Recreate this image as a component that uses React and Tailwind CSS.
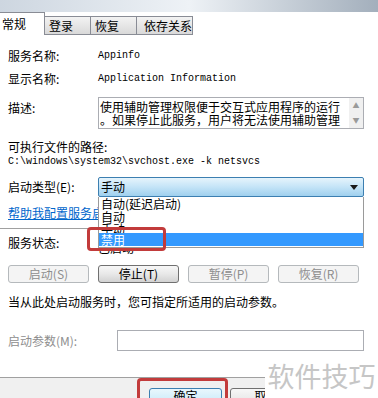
function Btn({ children, disabled }) {
  return (
    <div
      className={
        disabled
          ? "h-[18px] w-[81px] flex items-center justify-center rounded-[3px] border border-[#b5b9bc] bg-[#f4f4f4] text-[12px] leading-none text-[#8e8e8e]"
          : "h-[18px] w-[81px] flex items-center justify-center rounded-[3px] border border-[#707070] bg-gradient-to-b from-[#f7f7f7] via-[#e8e8e8] to-[#d2d2d2] text-[12px] leading-none text-black"
      }
    >
      {children}
    </div>
  )
}

function Row({ label, children, className = "" }) {
  return (
    <div className={`flex items-center h-[14px] ${className}`}>
      <div className="w-[90px] shrink-0 text-[12px] leading-[14px]">{label}</div>
      {children}
    </div>
  )
}

export default function App() {
  return (
    <div className="relative w-[378px] h-[398px] overflow-hidden bg-white text-black font-['Noto_Sans_CJK_SC','Noto_Sans',sans-serif]">
      {/* window chrome strip */}
      <div className="h-[12px] bg-gradient-to-r from-[#cdd6e0] via-[#eef2f6] to-[#a3afbc]" />

      {/* tabs */}
      <div className="flex items-end h-[23px] text-[12px]">
        <div className="h-[23px] w-[45px] bg-white border-r border-t border-[#898c95] pl-[2px] pt-[4px] leading-[14px]">
          常规
        </div>
        <div className="h-[19px] w-[46px] border-r border-t border-b border-[#898c95] bg-gradient-to-b from-[#f3f3f3] to-[#d9d9d9] pl-[4px] pt-[2px] leading-[14px]">
          登录
        </div>
        <div className="h-[19px] w-[46px] border-r border-t border-b border-[#898c95] bg-gradient-to-b from-[#f3f3f3] to-[#d9d9d9] pl-[4px] pt-[2px] leading-[14px]">
          恢复
        </div>
        <div className="h-[19px] w-[56px] border-r border-t border-b border-[#898c95] bg-gradient-to-b from-[#f3f3f3] to-[#d9d9d9] pl-[7px] pt-[2px] leading-[14px] whitespace-nowrap">
          依存关系
        </div>
        <div className="flex-1" />
      </div>

      {/* body */}
      <div className="pl-[8px]">
        <Row label="服务名称:" className="mt-[14px]">
          <span className="font-['Liberation_Mono',monospace] text-[10px] leading-[14px]">Appinfo</span>
        </Row>
        <Row label="显示名称:" className="mt-[9px]">
          <span className="font-['Liberation_Mono',monospace] text-[10px] leading-[14px]">Application Information</span>
        </Row>

        <div className="flex mt-[11px] h-[32px]">
          <div className="w-[90px] shrink-0 mt-[4px] text-[12px] leading-[14px]">描述:</div>
          <div className="flex w-[266px] h-[32px] border border-[#abadb3]">
            <div className="flex-1 pl-[1px] pt-[2px] text-[12px] leading-[13px] overflow-hidden whitespace-nowrap">
              <div>使用辅助管理权限便于交互式应用程序的运行</div>
              <div>。如果停止此服务，用户将无法使用辅助管理</div>
            </div>
            <div className="w-[14px] bg-[#f0f0f0] flex flex-col items-center justify-between py-[4px] text-[7px] leading-none text-[#9a9a9a]">
              <span>▲</span>
              <span>▼</span>
            </div>
          </div>
        </div>

        <div className="mt-[11px] h-[14px] text-[12px] leading-[14px]">可执行文件的路径:</div>
        <div className="mt-[1px] h-[14px] font-['Liberation_Mono',monospace] text-[10px] leading-[14px] whitespace-nowrap">
          C:\windows\system32\svchost.exe -k netsvcs
        </div>

        <div className="flex items-center mt-[8px] h-[20px]">
          <div className="w-[90px] shrink-0 text-[12px] leading-[14px]">启动类型(E):</div>
          <div className="relative z-10 w-[266px] h-[20px] rounded-[2px] border border-[#3c7fb1] bg-gradient-to-b from-[#e6f4fc] via-[#c4e4f7] to-[#9fd0ee] flex items-center justify-between pl-[2px] pr-[5px]">
            <span className="text-[12px] leading-[14px]">手动</span>
            <svg width="8" height="5" viewBox="0 0 8 5">
              <path d="M0 0 L8 0 L4 5 Z" fill="#1a1a1a" />
            </svg>
            {/* open list */}
            <div className="absolute -left-px top-[19px] w-[266px] h-[51px] bg-white border border-t-0 border-[#9a9a9a] flex flex-col text-[12px]">
              <div className="h-[13px] pl-[2px] leading-[13px] whitespace-nowrap">自动(延迟启动)</div>
              <div className="h-[14px] pl-[2px] leading-[14px]">自动</div>
              <div className="h-[9px] pl-[2px] leading-[9px]">手动</div>
              <div className="relative h-[13px] pl-[2px] leading-[13px] bg-[#3399ff] text-white">禁用</div>
              <div className="absolute left-[-12px] top-[30px] w-[79px] h-[24px] rounded-[4px] border-[3px] border-[#c23b3b]" />
            </div>
          </div>
        </div>

        <div className="mt-[9px] h-[14px] text-[12px] leading-[14px] text-[#0066cc] underline whitespace-nowrap">
          帮助我配置服务启动选项。
        </div>

        <div className="mt-[8px] ml-[-8px] w-[364px] h-px bg-[#a0a0a0]" />

        <Row label="服务状态:" className="mt-[7px]">
          <span className="text-[12px] leading-[14px] translate-y-[5px]">已启动</span>
        </Row>

        <div className="flex gap-[9px] mt-[15px] h-[18px]">
          <Btn disabled>启动(S)</Btn>
          <Btn>停止(T)</Btn>
          <Btn disabled>暂停(P)</Btn>
          <Btn disabled>恢复(R)</Btn>
        </div>

        <div className="mt-[12px] h-[14px] text-[12px] leading-[14px] whitespace-nowrap">
          当从此处启动服务时，您可指定所适用的启动参数。
        </div>

        <div className="flex items-center mt-[21px] h-[21px]">
          <div className="w-[109px] shrink-0 text-[12px] leading-[14px] text-[#8e8e8e]">启动参数(M):</div>
          <div className="w-[247px] h-[21px] border border-[#abadb3] bg-white" />
        </div>
      </div>

      {/* footer */}
      <div className="relative mt-[26px] h-[21px] border-t border-[#a0a0a0] bg-[#f0f0f0]">
        <div className="flex gap-[8px] pl-[149px] pt-[10px]">
          <div className="h-[23px] w-[73px] rounded-[3px] border border-[#3c7fb1] bg-gradient-to-b from-[#e9f7fd] to-[#b9e4f8] flex items-start justify-center text-[12px] leading-[13px]">
            确定
          </div>
          <div className="h-[23px] w-[73px] rounded-[3px] border border-[#707070] bg-gradient-to-b from-[#f7f7f7] to-[#dcdcdc] flex items-start justify-center text-[12px] leading-[13px]">
            取消
          </div>
        </div>
        <div className="absolute left-[137px] top-0 w-[91px] h-[26px] rounded-[4px] border-[3px] border-[#c23b3b]" />
      </div>

      {/* watermark */}
      <div className="absolute left-[265px] top-[352px] w-[113px] h-[46px] bg-white flex items-center justify-center text-[27px] leading-none text-[#c6c6c6] whitespace-nowrap">
        软件技巧
      </div>
    </div>
  )
}
